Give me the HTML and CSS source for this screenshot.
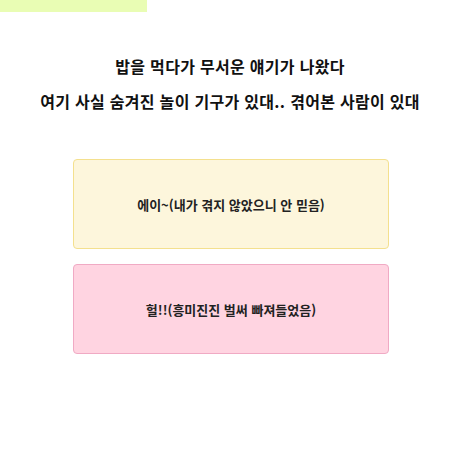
FILE: index.html
```html
<!DOCTYPE html>
<html lang="ko">
<head>
    <meta charset="UTF-8">
    <meta name="viewport" content="width=device-width, initial-scale=1.0">
    <title>질문</title>
    <link rel="stylesheet" href="styles.css">
</head>
<body>
    <div class="progress">
        <div class="progress-bar" style="width: 32%"></div>
    </div>

    <main class="question">
        <h1 class="title">밥을 먹다가 무서운 얘기가 나왔다</h1>
        <h2 class="title">여기 사실 숨겨진 놀이 기구가 있대.. 겪어본 사람이 있대</h2>

        <div class="answers">
            <button class="answer yellow">에이~(내가 겪지 않았으니 안 믿음)</button>
            <button class="answer pink">헐!!(흥미진진 벌써 빠져들었음)</button>
        </div>
    </main>
</body>
</html>
```

FILE: styles.css
```css
* {
    margin: 0;
    padding: 0;
    box-sizing: border-box;
}

body {
    font-family: "Noto Sans CJK KR", "Noto Sans", sans-serif;
    background: #ffffff;
    color: #111111;
}

/* Progress along the questions */
.progress {
    width: 100%;
    height: 12px;
}

.progress-bar {
    height: 100%;
    background: #e9fdb4;
}

.question {
    display: flex;
    flex-direction: column;
    align-items: center;
    padding-top: 42px;
}

.title {
    font-size: 16px;
    font-weight: bold;
    line-height: 24px;
    text-align: center;
    letter-spacing: 0.3px;
}

h2.title {
    margin-top: 11px;
}

.answers {
    display: flex;
    flex-direction: column;
    gap: 15px;
    width: 316px;
    margin-top: 46px;
    margin-left: 2px;
}

.answer {
    height: 90px;
    border-radius: 4px;
    font-family: inherit;
    font-size: 13px;
    font-weight: bold;
    color: #222222;
    cursor: pointer;
}

.answer.yellow {
    background: #fdf6dc;
    border: 1px solid #f4e08e;
}

.answer.pink {
    background: #ffd4e1;
    border: 1px solid #f0aac4;
}
```
